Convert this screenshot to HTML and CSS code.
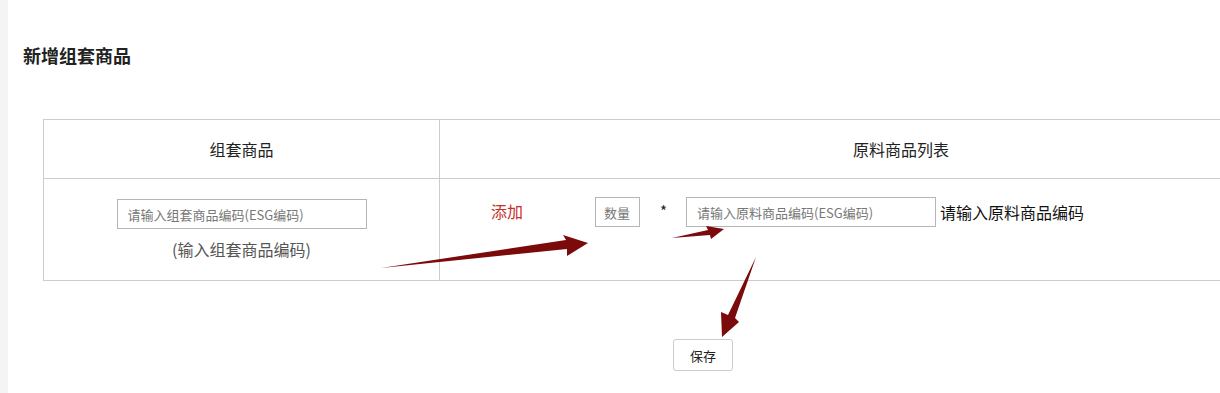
FILE: index.html
```html
<!DOCTYPE html>
<html lang="zh-CN">
<head>
    <meta charset="UTF-8">
    <meta name="viewport" content="width=device-width, initial-scale=1.0">
    <link rel="stylesheet" href="styles.css">
    <title>新增组套商品</title>
</head>
<body>
    <div class="page">
        <h3 class="title">新增组套商品</h3>
        <div class="wrap">
            <table class="tbl">
                <tr>
                    <th class="colLeft">组套商品</th>
                    <th class="colRight">原料商品列表</th>
                </tr>
                <tr>
                    <td class="colLeft">
                        <input type="text" class="ipt" placeholder="请输入组套商品编码(ESG编码)">
                        <p class="hint">(输入组套商品编码)</p>
                    </td>
                    <td class="colRight">
                        <div class="rowItem">
                            <a class="add">添加</a>
                            <input type="text" class="num" placeholder="数量">
                            <span class="star">*</span>
                            <input type="text" class="ipt" placeholder="请输入原料商品编码(ESG编码)">
                            <span class="msg">请输入原料商品编码</span>
                        </div>
                    </td>
                </tr>
            </table>
            <div class="btns">
                <button class="btn">保存</button>
            </div>
        </div>
    </div>

    <!-- 标注箭头 -->
    <svg class="arrows" width="1220" height="393" viewBox="0 0 1220 393">
        <polygon points="381,268 566,240 563,235 588,243 567,256 567,249" fill="#7b0a0a"/>
        <polygon points="672,238 708,230 706,226 724,229 711,239 710,235" fill="#7b0a0a"/>
        <polygon points="756,257 735,318 739,322 722,337 721,312 728,315" fill="#7b0a0a"/>
    </svg>
</body>
</html>
```
FILE: styles.css
```css
*{
    font-family: "Noto Sans CJK SC", "Liberation Sans", sans-serif;
    box-sizing: border-box;
}
body{
    margin: 0;
    padding: 0;
    background: #fff;
    overflow: hidden;
    width: 1220px;
    height: 393px;
    position: relative;
}
.page{
    border-left: 8px solid #f4f4f4;
    height: 393px;
    padding-top: 42px;
}
.title{
    margin: 0 0 0 15px;
    font-size: 18px;
    line-height: 26px;
    font-weight: bold;
    color: #222;
}
.wrap{
    margin-top: 51px;
    margin-left: 35px;
}
/* 表格右侧超出可视区域，右边框不显示 */
.tbl{
    width: 100%;
    border-collapse: collapse;
}
.tbl th, .tbl td{
    border: 1px solid #ccc;
    color: #222;
}
.tbl .colRight{
    border-right: none;
}
.tbl th{
    height: 59px;
    font-size: 16px;
    font-weight: normal;
}
.tbl th.colRight{
    padding-left: 143px;
}
.tbl td{
    height: 102px;
    vertical-align: top;
}
.colLeft{
    width: 396px;
    text-align: center;
}
.colLeft .ipt{
    margin-top: 19px;
}
.ipt{
    width: 250px;
    height: 30px;
    border: 1px solid #b5b5b5;
    padding: 0 10px;
    font-size: 13px;
    outline: none;
}
.ipt::placeholder, .num::placeholder{
    color: #777;
}
.hint{
    margin: 9px 0 0;
    font-size: 16px;
    line-height: 22px;
    color: #555;
}
.rowItem{
    display: flex;
    align-items: center;
    padding-top: 17px;
    padding-left: 50px;
}
.add{
    color: #c4302b;
    font-size: 16px;
    margin-right: 72px;
    position: relative;
    top: -1px;
}
.num{
    width: 45px;
    height: 30px;
    border: 1px solid #b5b5b5;
    padding: 0 0 0 8px;
    font-size: 13px;
}
.star{
    margin: 0 19px 0 20px;
    font-size: 15px;
    position: relative;
    top: -2px;
}
.msg{
    margin-left: 4px;
    font-size: 16px;
    color: #111;
}
.btns{
    display: flex;
    justify-content: center;
    padding-top: 58px;
    padding-left: 143px;
}
.btn{
    width: 60px;
    height: 32px;
    background: #fff;
    border: 1px solid #ccc;
    border-radius: 3px;
    font-size: 13px;
    color: #222;
}
.arrows{
    position: absolute;
    left: 0;
    top: 0;
    pointer-events: none;
}
```
